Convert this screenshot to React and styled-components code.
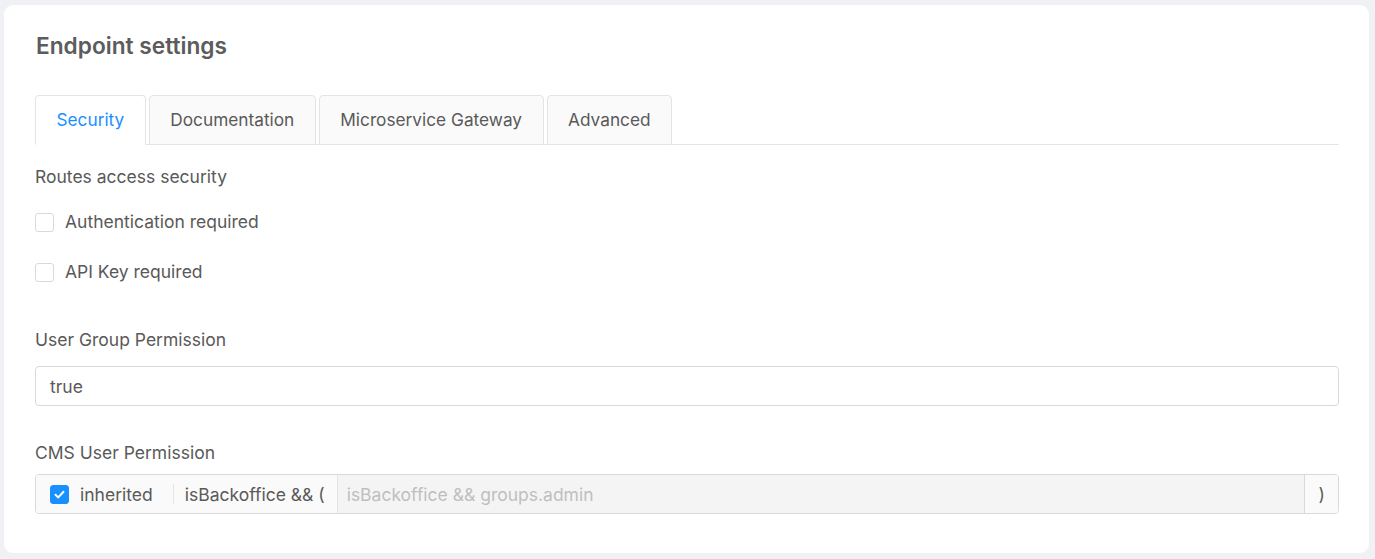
import React from "react";
import styled, { createGlobalStyle } from "styled-components";

const Global = createGlobalStyle`
  html, body { margin: 0; padding: 0; background: #f0f1f4; }
  body { font-family: Inter, "Noto Sans", sans-serif; color: #595959; }
  * { box-sizing: border-box; }
`;

const Page = styled.div`
  padding: 5px 6px 6px 4px;
`;

const Card = styled.div`
  background: #fff;
  border-radius: 9px;
  padding: 27px 30px 40px 31px;
  height: 548px;
`;

const Title = styled.h2`
  margin: 0 0 0 1px;
  font-size: 22.7px;
  font-weight: 600;
  line-height: 28px;
  color: #5c5c5c;
`;

const TabBar = styled.div`
  margin-top: 35px;
  display: flex;
  gap: 3px;
  border-bottom: 1px solid #e4e4e4;
  height: 50px;
`;

const Tab = styled.div`
  height: 50px;
  padding: 0 20.5px 2px;
  display: flex;
  align-items: center;
  font-size: 17.25px;
  border: 1px solid #e4e4e4;
  border-bottom: ${(p) => (p.$active ? "1px solid #fff" : "1px solid #e4e4e4")};
  border-radius: 4px 4px 0 0;
  background: ${(p) => (p.$active ? "#fff" : "#fafafa")};
  color: ${(p) => (p.$active ? "#1890ff" : "#595959")};
`;

const Label = styled.div`
  font-size: 17.5px;
  line-height: 24px;
  color: #595959;
  margin-top: ${(p) => p.$mt || 0}px;
`;

const CheckRow = styled.label`
  display: flex;
  align-items: center;
  gap: 11px;
  font-size: 17.5px;
  line-height: 24px;
  color: #595959;
  margin-top: ${(p) => p.$mt || 0}px;
`;

const Box = styled.span`
  width: 19px;
  height: 19px;
  border-radius: 3px;
  border: 1px solid ${(p) => (p.$checked ? "#1890ff" : "#d9d9d9")};
  background: ${(p) => (p.$checked ? "#1890ff" : "#fff")};
  display: inline-flex;
  align-items: center;
  justify-content: center;
  flex: none;
`;

const Input = styled.div`
  margin-top: 14px;
  height: 40px;
  border: 1px solid #d9d9d9;
  border-radius: 4px;
  padding: 0 14px;
  display: flex;
  align-items: center;
  font-size: 17.5px;
  color: #595959;
`;

const Group = styled.div`
  margin-top: 9px;
  height: 40px;
  display: flex;
  border: 1px solid #d9d9d9;
  border-radius: 4px;
  overflow: hidden;
  font-size: 17.5px;
`;

const Addon = styled.div`
  display: flex;
  align-items: center;
  background: #fafafa;
  color: #595959;
  padding: ${(p) => p.$pad || "0 12px 0 14px"};
  flex: none;
  ${(p) => (p.$right ? "border-left: 1px solid #d9d9d9;" : "border-right: 1px solid #e4e4e4;")}
`;

const Inherit = styled.span`
  display: flex;
  align-items: center;
  gap: 11px;
  padding-right: 20px;
  border-right: 1px solid #e4e4e4;
  height: 20px;
`;

const Expr = styled.span`
  padding-left: 11px;
`;

const Field = styled.div`
  flex: 1;
  background: #f4f4f4;
  color: #bfbfbf;
  display: flex;
  align-items: center;
  padding: 0 9px;
`;

const Check = () => (
  <svg width="13" height="13" viewBox="0 0 13 13">
    <path d="M2.5 6.8 L5.3 9.4 L10.5 3.8" fill="none" stroke="#fff" strokeWidth="2" strokeLinecap="round" strokeLinejoin="round" />
  </svg>
);

export default function App() {
  return (
    <>
      <Global />
      <Page>
        <Card>
          <Title>Endpoint settings</Title>
          <TabBar>
            <Tab $active>Security</Tab>
            <Tab>Documentation</Tab>
            <Tab>Microservice Gateway</Tab>
            <Tab>Advanced</Tab>
          </TabBar>
          <Label $mt={20}>Routes access security</Label>
          <CheckRow $mt={21}>
            <Box />
            Authentication required
          </CheckRow>
          <CheckRow $mt={26}>
            <Box />
            API Key required
          </CheckRow>
          <Label $mt={44}>User Group Permission</Label>
          <Input>true</Input>
          <Label $mt={35}>CMS User Permission</Label>
          <Group>
            <Addon>
              <Inherit>
                <Box $checked>
                  <Check />
                </Box>
                inherited
              </Inherit>
              <Expr>isBackoffice &amp;&amp; (</Expr>
            </Addon>
            <Field>isBackoffice &amp;&amp; groups.admin</Field>
            <Addon $right $pad="0 13px 0 14px">)</Addon>
          </Group>
        </Card>
      </Page>
    </>
  );
}
